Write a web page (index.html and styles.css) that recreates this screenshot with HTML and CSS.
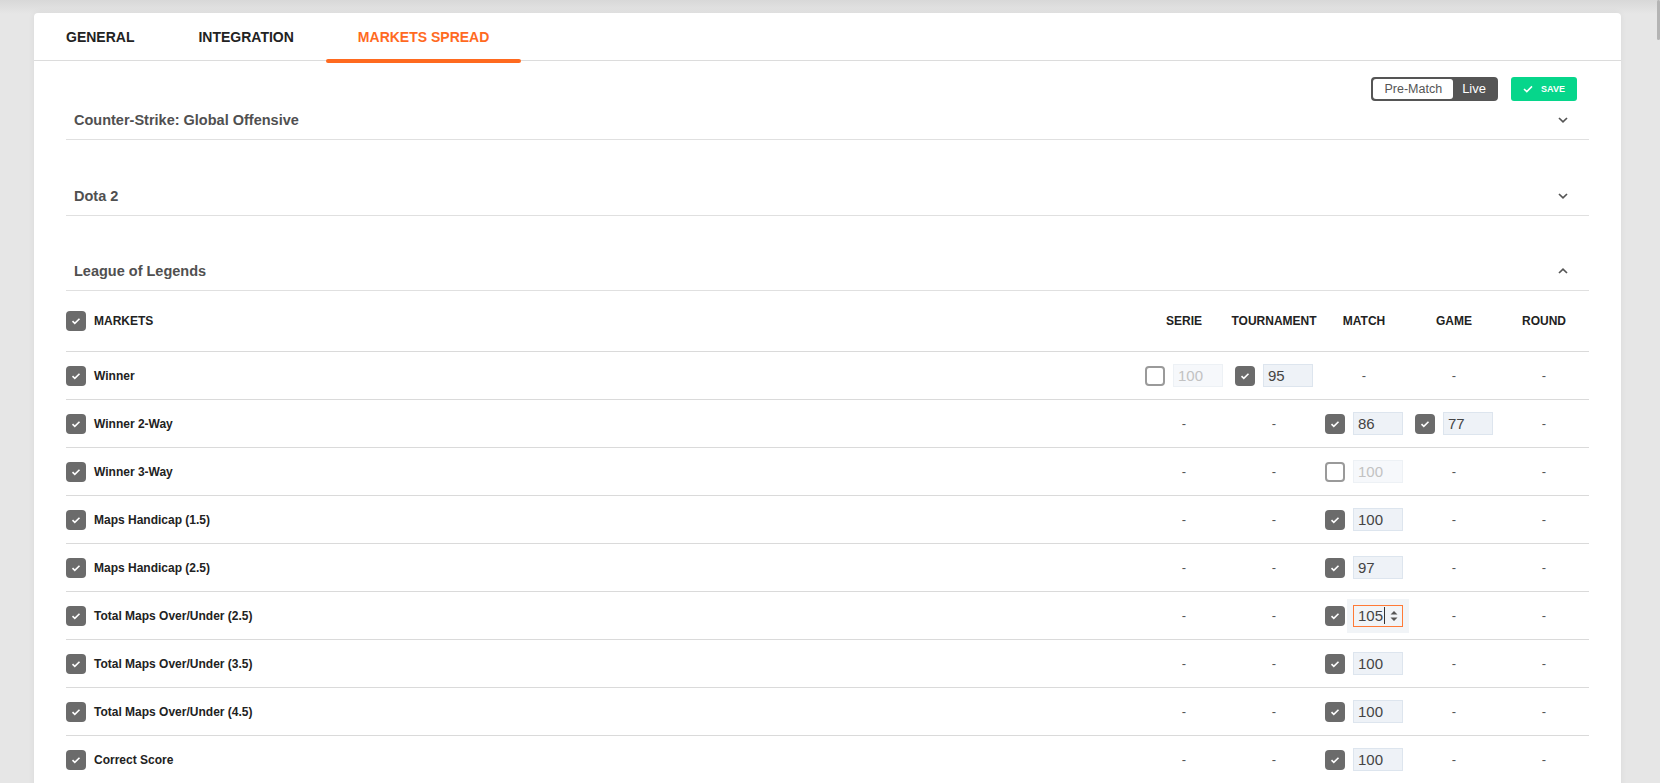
FILE: index.html
```html
<!DOCTYPE html>
<html lang="en">
<head>
    <meta charset="UTF-8">
    <meta name="viewport" content="width=device-width, initial-scale=1.0">
    <title>Markets Spread</title>
    <link rel="stylesheet" href="styles.css">
</head>
<body>
    <div class="page">
        <div class="card">
            <!-- tabs -->
            <nav class="tabs">
                <a class="tab">GENERAL</a>
                <a class="tab">INTEGRATION</a>
                <a class="tab active">MARKETS SPREAD</a>
            </nav>

            <div class="content">
                <div class="toolbar">
                    <div class="mode-toggle">
                        <span class="mode">Pre-Match</span>
                        <span class="mode live">Live</span>
                    </div>
                    <button class="save-btn">
                        <svg width="10" height="8" viewBox="0 0 10 8"><path d="M1 4 L3.8 6.6 L9 1.4" fill="none" stroke="#fff" stroke-width="1.5"/></svg>
                        SAVE
                    </button>
                </div>

                <div class="sport">
                    <div class="sport-header">
                        <span>Counter-Strike: Global Offensive</span>
                        <svg class="chevron" width="10" height="6" viewBox="0 0 10 6"><path d="M1 1 L5 4.8 L9 1" fill="none" stroke="#555" stroke-width="1.7"/></svg>
                    </div>
                </div>

                <div class="sport">
                    <div class="sport-header">
                        <span>Dota 2</span>
                        <svg class="chevron" width="10" height="6" viewBox="0 0 10 6"><path d="M1 1 L5 4.8 L9 1" fill="none" stroke="#555" stroke-width="1.7"/></svg>
                    </div>
                </div>

                <div class="sport open">
                    <div class="sport-header">
                        <span>League of Legends</span>
                        <svg class="chevron" width="10" height="6" viewBox="0 0 10 6"><path d="M1 5 L5 1.2 L9 5" fill="none" stroke="#555" stroke-width="1.7"/></svg>
                    </div>

                    <div class="markets">
                        <div class="market-row market-head">
                            <div class="market-name"><span class="cbox"><svg width="20" height="20" viewBox="0 0 20 20"><path d="M6.5 10.2 L8.8 12.4 L13.5 7.8" fill="none" stroke="#fff" stroke-width="1.6"/></svg></span>MARKETS</div>
                            <div class="col-title">SERIE</div>
                            <div class="col-title">TOURNAMENT</div>
                            <div class="col-title">MATCH</div>
                            <div class="col-title">GAME</div>
                            <div class="col-title">ROUND</div>
                        </div>

                        <div class="market-row">
                            <div class="market-name"><span class="cbox"><svg width="20" height="20" viewBox="0 0 20 20"><path d="M6.5 10.2 L8.8 12.4 L13.5 7.8" fill="none" stroke="#fff" stroke-width="1.6"/></svg></span>Winner</div>
                            <div class="cell"><span class="cbox off"></span><span class="num disabled">100</span></div>
                            <div class="cell"><span class="cbox"><svg width="20" height="20" viewBox="0 0 20 20"><path d="M6.5 10.2 L8.8 12.4 L13.5 7.8" fill="none" stroke="#fff" stroke-width="1.6"/></svg></span><span class="num">95</span></div>
                            <div class="cell">-</div>
                            <div class="cell">-</div>
                            <div class="cell">-</div>
                        </div>

                        <div class="market-row">
                            <div class="market-name"><span class="cbox"><svg width="20" height="20" viewBox="0 0 20 20"><path d="M6.5 10.2 L8.8 12.4 L13.5 7.8" fill="none" stroke="#fff" stroke-width="1.6"/></svg></span>Winner 2-Way</div>
                            <div class="cell">-</div>
                            <div class="cell">-</div>
                            <div class="cell"><span class="cbox"><svg width="20" height="20" viewBox="0 0 20 20"><path d="M6.5 10.2 L8.8 12.4 L13.5 7.8" fill="none" stroke="#fff" stroke-width="1.6"/></svg></span><span class="num">86</span></div>
                            <div class="cell"><span class="cbox"><svg width="20" height="20" viewBox="0 0 20 20"><path d="M6.5 10.2 L8.8 12.4 L13.5 7.8" fill="none" stroke="#fff" stroke-width="1.6"/></svg></span><span class="num">77</span></div>
                            <div class="cell">-</div>
                        </div>

                        <div class="market-row">
                            <div class="market-name"><span class="cbox"><svg width="20" height="20" viewBox="0 0 20 20"><path d="M6.5 10.2 L8.8 12.4 L13.5 7.8" fill="none" stroke="#fff" stroke-width="1.6"/></svg></span>Winner 3-Way</div>
                            <div class="cell">-</div>
                            <div class="cell">-</div>
                            <div class="cell"><span class="cbox off"></span><span class="num disabled">100</span></div>
                            <div class="cell">-</div>
                            <div class="cell">-</div>
                        </div>

                        <div class="market-row">
                            <div class="market-name"><span class="cbox"><svg width="20" height="20" viewBox="0 0 20 20"><path d="M6.5 10.2 L8.8 12.4 L13.5 7.8" fill="none" stroke="#fff" stroke-width="1.6"/></svg></span>Maps Handicap (1.5)</div>
                            <div class="cell">-</div>
                            <div class="cell">-</div>
                            <div class="cell"><span class="cbox"><svg width="20" height="20" viewBox="0 0 20 20"><path d="M6.5 10.2 L8.8 12.4 L13.5 7.8" fill="none" stroke="#fff" stroke-width="1.6"/></svg></span><span class="num">100</span></div>
                            <div class="cell">-</div>
                            <div class="cell">-</div>
                        </div>

                        <div class="market-row">
                            <div class="market-name"><span class="cbox"><svg width="20" height="20" viewBox="0 0 20 20"><path d="M6.5 10.2 L8.8 12.4 L13.5 7.8" fill="none" stroke="#fff" stroke-width="1.6"/></svg></span>Maps Handicap (2.5)</div>
                            <div class="cell">-</div>
                            <div class="cell">-</div>
                            <div class="cell"><span class="cbox"><svg width="20" height="20" viewBox="0 0 20 20"><path d="M6.5 10.2 L8.8 12.4 L13.5 7.8" fill="none" stroke="#fff" stroke-width="1.6"/></svg></span><span class="num">97</span></div>
                            <div class="cell">-</div>
                            <div class="cell">-</div>
                        </div>

                        <div class="market-row">
                            <div class="market-name"><span class="cbox"><svg width="20" height="20" viewBox="0 0 20 20"><path d="M6.5 10.2 L8.8 12.4 L13.5 7.8" fill="none" stroke="#fff" stroke-width="1.6"/></svg></span>Total Maps Over/Under (2.5)</div>
                            <div class="cell">-</div>
                            <div class="cell">-</div>
                            <div class="cell"><span class="cbox"><svg width="20" height="20" viewBox="0 0 20 20"><path d="M6.5 10.2 L8.8 12.4 L13.5 7.8" fill="none" stroke="#fff" stroke-width="1.6"/></svg></span><span class="num focused">105<i class="caret"></i><svg class="spin" width="8" height="12" viewBox="0 0 8 12"><path d="M0.5 4.5 L4 1 L7.5 4.5 Z M0.5 7.5 L4 11 L7.5 7.5 Z" fill="#555"/></svg></span></div>
                            <div class="cell">-</div>
                            <div class="cell">-</div>
                        </div>

                        <div class="market-row">
                            <div class="market-name"><span class="cbox"><svg width="20" height="20" viewBox="0 0 20 20"><path d="M6.5 10.2 L8.8 12.4 L13.5 7.8" fill="none" stroke="#fff" stroke-width="1.6"/></svg></span>Total Maps Over/Under (3.5)</div>
                            <div class="cell">-</div>
                            <div class="cell">-</div>
                            <div class="cell"><span class="cbox"><svg width="20" height="20" viewBox="0 0 20 20"><path d="M6.5 10.2 L8.8 12.4 L13.5 7.8" fill="none" stroke="#fff" stroke-width="1.6"/></svg></span><span class="num">100</span></div>
                            <div class="cell">-</div>
                            <div class="cell">-</div>
                        </div>

                        <div class="market-row">
                            <div class="market-name"><span class="cbox"><svg width="20" height="20" viewBox="0 0 20 20"><path d="M6.5 10.2 L8.8 12.4 L13.5 7.8" fill="none" stroke="#fff" stroke-width="1.6"/></svg></span>Total Maps Over/Under (4.5)</div>
                            <div class="cell">-</div>
                            <div class="cell">-</div>
                            <div class="cell"><span class="cbox"><svg width="20" height="20" viewBox="0 0 20 20"><path d="M6.5 10.2 L8.8 12.4 L13.5 7.8" fill="none" stroke="#fff" stroke-width="1.6"/></svg></span><span class="num">100</span></div>
                            <div class="cell">-</div>
                            <div class="cell">-</div>
                        </div>

                        <div class="market-row">
                            <div class="market-name"><span class="cbox"><svg width="20" height="20" viewBox="0 0 20 20"><path d="M6.5 10.2 L8.8 12.4 L13.5 7.8" fill="none" stroke="#fff" stroke-width="1.6"/></svg></span>Correct Score</div>
                            <div class="cell">-</div>
                            <div class="cell">-</div>
                            <div class="cell"><span class="cbox"><svg width="20" height="20" viewBox="0 0 20 20"><path d="M6.5 10.2 L8.8 12.4 L13.5 7.8" fill="none" stroke="#fff" stroke-width="1.6"/></svg></span><span class="num">100</span></div>
                            <div class="cell">-</div>
                            <div class="cell">-</div>
                        </div>
                    </div>
                </div>
            </div>
        </div>
    </div>
    <div class="scroll-thumb"></div>
</body>
</html>
```

FILE: styles.css
```css
/* page */
html {
    overflow: hidden;
}

body {
    margin: 0;
    font-family: "Liberation Sans", Arial, sans-serif;
    color: #222;
    background: #e6e6e6 linear-gradient(#d8d8d8, #e6e6e6) no-repeat;
    background-size: 100% 14px;
}

.page {
    padding: 13px 39px 0 34px;
}

.card {
    background: #fff;
    border-radius: 4px 4px 0 0;
    box-shadow: 0 0 6px rgba(0, 0, 0, 0.06);
    min-height: 900px;
}

/* tabs */
.tabs {
    display: flex;
    height: 47px;
    border-bottom: 1px solid #dcdcdc;
}

.tab {
    position: relative;
    padding: 1px 32px 0 32px;
    line-height: 46px;
    font-size: 14px;
    font-weight: bold;
    color: #222;
    cursor: pointer;
}

.tab.active {
    color: #ff6a1f;
}

.tab.active::after {
    content: "";
    position: absolute;
    left: 0;
    right: 0;
    bottom: -3px;
    height: 4px;
    border-radius: 2px;
    background: #ff6a1f;
}

.content {
    padding: 16px 32px 0 32px;
}

/* toolbar */
.toolbar {
    display: flex;
    justify-content: flex-end;
    gap: 13px;
    height: 24px;
    padding-right: 12px;
}

.mode-toggle {
    display: flex;
    box-sizing: border-box;
    height: 24px;
    border: 2px solid #555;
    border-radius: 4px;
    background: #555;
}

.mode {
    line-height: 20px;
    padding: 0 11px;
    font-size: 12.5px;
    color: #555;
    background: #fff;
    border-radius: 3px;
}

.mode.live {
    padding: 0 10px 0 9px;
    font-size: 13px;
    color: #fff;
    background: transparent;
}

.save-btn {
    display: flex;
    align-items: center;
    justify-content: center;
    gap: 8px;
    width: 66px;
    height: 24px;
    padding: 0;
    border: none;
    border-radius: 3px;
    background: #06d68b;
    color: #fff;
    font-family: inherit;
    font-size: 9px;
    font-weight: bold;
}

/* sports accordion */
.sport + .sport {
    margin-top: 37px;
}

.sport + .sport.open {
    margin-top: 36px;
}

.sport-header {
    display: flex;
    align-items: center;
    justify-content: space-between;
    height: 38px;
    padding: 0 21px 0 8px;
    border-bottom: 1px solid #e0e0e0;
    font-size: 14.5px;
    font-weight: bold;
    color: #505050;
}

/* markets table */
.market-row {
    display: grid;
    grid-template-columns: 1fr repeat(5, 90px);
    align-items: center;
    height: 47px;
    border-bottom: 1px solid #dadada;
}

.market-row.market-head {
    height: 60px;
}

.market-name {
    display: flex;
    align-items: center;
    gap: 8px;
    font-size: 12px;
    font-weight: bold;
    color: #222;
}

.col-title {
    text-align: center;
    font-size: 12px;
    font-weight: bold;
    color: #222;
}

.cell {
    display: flex;
    align-items: center;
    justify-content: center;
    gap: 8px;
    font-size: 13px;
    color: #555;
}

.cbox {
    display: block;
    width: 20px;
    height: 20px;
    border-radius: 4px;
    background: #6b6b6b;
    box-sizing: border-box;
}

.cbox svg {
    display: block;
}

.cbox.off {
    background: #fff;
    border: 2px solid #9a9a9a;
}

.num {
    display: flex;
    align-items: center;
    box-sizing: border-box;
    width: 50px;
    height: 23px;
    padding-left: 4px;
    border: 1px solid #dde5ee;
    background: #eef2f7;
    font-size: 15px;
    color: #444;
}

.num.disabled {
    background: #f6f8fb;
    border-color: #edf1f5;
    color: #c2c2c2;
}

.num.focused {
    height: 22px;
    border-color: #ff7a36;
    background: #f1f4f7;
    box-shadow: 0 0 0 6px #f1f4f7;
}

.caret {
    display: block;
    width: 1px;
    height: 17px;
    margin-left: 1px;
    background: #333;
}

.spin {
    margin-left: 5px;
}

.scroll-thumb {
    position: fixed;
    top: 0;
    right: 0;
    width: 3px;
    height: 40px;
    border-radius: 2px;
    background: #b4b4b4;
}
```
